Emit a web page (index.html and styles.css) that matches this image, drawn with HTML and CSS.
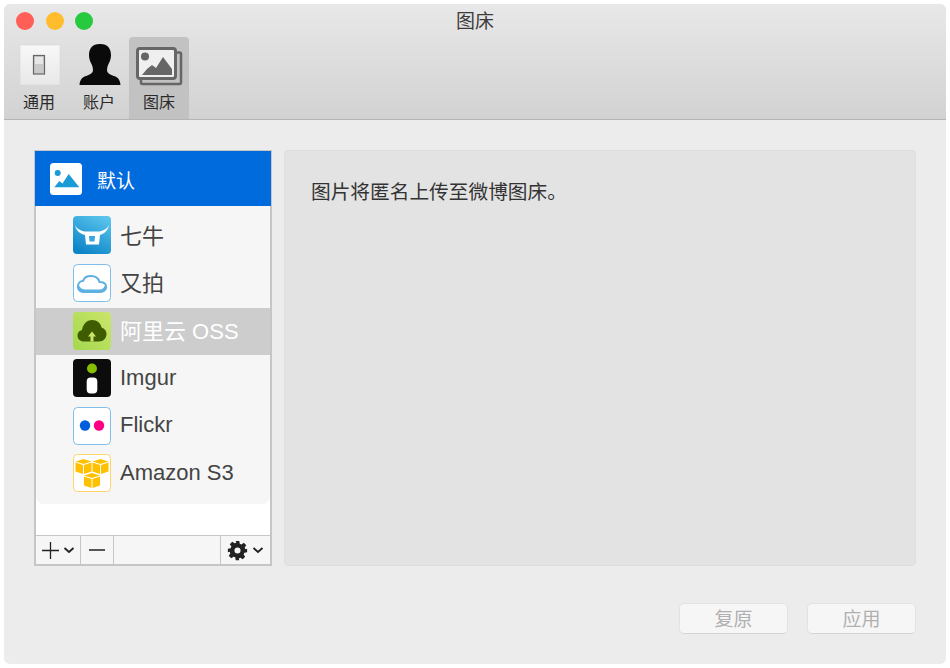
FILE: index.html
```html
<!DOCTYPE html>
<html lang="zh-CN">
<head>
    <meta charset="UTF-8">
    <title>图床</title>
    <link rel="stylesheet" href="styles.css">
</head>
<body>
    <div class="window">
        <header class="titlebar">
            <div class="traffic">
                <span class="light red"></span>
                <span class="light yellow"></span>
                <span class="light green"></span>
            </div>
            <div class="title">图床</div>
            <div class="tabs">
                <div class="tab">
                    <svg class="tab-icon" viewBox="0 0 44 44">
                        <defs>
                            <linearGradient id="sw" x1="0" y1="0" x2="0" y2="1">
                                <stop offset="0" stop-color="#f8f8f8"/>
                                <stop offset="1" stop-color="#e8e8e8"/>
                            </linearGradient>
                        </defs>
                        <rect x="3" y="2" width="40" height="40" fill="url(#sw)" stroke="#d8d8d8" stroke-width="0.6"/>
                        <rect x="16.500" y="12.500" width="11" height="18.500" fill="#c9c9c9" stroke="#666" stroke-width="1.200"/>
                        <rect x="18" y="14" width="8" height="7" fill="#e6e6e6"/>
                    </svg>
                    <span>通用</span>
                </div>
                <div class="tab">
                    <svg class="tab-icon" viewBox="0 0 44 44">
                        <path d="M22.500 1c-7 0-10.500 4.500-10.500 11 0 3 .8 6 2.500 9 1 2 1.500 4 1.500 6 0 3-2.500 4.500-7 6-4 1.500-6 3.500-6.500 9h41c-.5-5.500-2.500-7.500-6.500-9-4.500-1.500-7-3-7-6 0-2 .5-4 1.500-6 1.700-3 2.500-6 2.500-9 0-6.500-3.500-11-10.500-11z" fill="#0a0a0a"/>
                    </svg>
                    <span>账户</span>
                </div>
                <div class="tab active">
                    <svg class="tab-icon tab-icon-wide" viewBox="0 0 48 44">
                        <path d="M6 37v2.500c0 1 .8 1.500 1.500 1.500h37c1 0 1.500-.8 1.500-1.500V11c0-1-.8-1.500-1.500-1.500H42" fill="none" stroke="#666" stroke-width="2.500"/>
                        <rect x="2.500" y="5.500" width="38" height="30" rx="2.500" fill="#efefef" stroke="#666" stroke-width="3"/>
                        <circle cx="10" cy="13.500" r="4" fill="#666"/>
                        <path d="M7 32l5-6 5-4 4 3 7-11 9 12v6z" fill="#666"/>
                    </svg>
                    <span>图床</span>
                </div>
            </div>
        </header>
        <main class="content">
            <div class="panes">
                <aside class="sidebar">
                    <div class="sidebar-head">
                        <span class="app-icon head-icon">
                            <svg viewBox="0 0 32 32">
                                <rect width="32" height="32" rx="3.500" fill="#fff"/>
                                <circle cx="7.700" cy="10" r="3" fill="#1a9ad6"/>
                                <path d="M4.300 24.300l5-6.300 3.200 2.500L18.700 11l10.600 13.300z" fill="#1a9ad6"/>
                            </svg>
                        </span>
                        <span class="head-name">默认</span>
                    </div>
                    <ul class="hosts">
                        <li class="host">
                            <span class="app-icon">
                                <svg viewBox="0 0 38 38">
                                    <defs>
                                        <linearGradient id="qn" x1="0.800" y1="0" x2="0.300" y2="1">
                                            <stop offset="0" stop-color="#5ac4ec"/>
                                            <stop offset="1" stop-color="#0c84c8"/>
                                        </linearGradient>
                                    </defs>
                                    <rect width="38" height="38" rx="4" fill="url(#qn)"/>
                                    <path d="M2 9c2 4 6 6 10 6.500h14c4-.5 8-2.500 10-6.500-1 5-4 8.500-9 10l-1 9.500H13l-1-9.500C6 17.500 3 14 2 9z" fill="#fff"/>
                                    <path d="M16 20h6l-.5 5.500h-5z" fill="#3aa6dc"/>
                                </svg>
                            </span>
                            <span class="host-name cjk">七牛</span>
                        </li>
                        <li class="host">
                            <span class="app-icon">
                                <svg viewBox="0 0 38 38">
                                    <rect x="0.500" y="0.500" width="37" height="37" rx="4" fill="#fff" stroke="#7dbfe8"/>
                                    <path d="M10.500 28c-4 0-5.500-2.500-5.500-5.700 0-3 2.200-5.300 5.200-5.600C11.200 13.500 14.500 12 18 12c4.500 0 7.500 2.300 8.500 6 3.800-.2 6.500 1.700 6.500 4.500 0 3.200-2.300 5.500-6 5.500z" fill="none" stroke="#5db0e2" stroke-width="2"/>
                                    <path d="M5 22.500c1.500 3.500 4.500 4.500 8 4.500h14c2.500 0 5-1.500 6-4.500" fill="none" stroke="#5db0e2" stroke-width="3"/>
                                </svg>
                            </span>
                            <span class="host-name cjk">又拍</span>
                        </li>
                        <li class="host selected">
                            <span class="app-icon">
                                <svg viewBox="0 0 38 38">
                                    <defs>
                                        <linearGradient id="ali" x1="1" y1="0" x2="0" y2="1">
                                            <stop offset="0" stop-color="#cbe56b"/>
                                            <stop offset="1" stop-color="#a3d84e"/>
                                        </linearGradient>
                                    </defs>
                                    <rect width="38" height="38" rx="4" fill="url(#ali)"/>
                                    <path d="M11 29.500c-4 0-6.500-2.500-6.500-6 0-3 2-5 4.500-5.500 1-6 5-10 10-10s9 3.500 9.500 7.500c3 .8 5 3.500 5 6.500 0 4-3 7.500-7.500 7.500z" fill="#3f5d00"/>
                                    <path d="M19 19.500l-4 5h2.500v5h3v-5H23z" fill="#cbe56b"/>
                                </svg>
                            </span>
                            <span class="host-name cjk">阿里云 OSS</span>
                        </li>
                        <li class="host">
                            <span class="app-icon">
                                <svg viewBox="0 0 38 38">
                                    <rect width="38" height="38" rx="4" fill="#0c0c0c"/>
                                    <circle cx="19" cy="9.500" r="5" fill="#85bf00"/>
                                    <rect x="13.700" y="18.500" width="10.600" height="16" rx="4" fill="#fff"/>
                                </svg>
                            </span>
                            <span class="host-name">Imgur</span>
                        </li>
                        <li class="host">
                            <span class="app-icon">
                                <svg viewBox="0 0 38 38">
                                    <rect x="0.500" y="0.500" width="37" height="37" rx="4" fill="#fff" stroke="#7dbfe8"/>
                                    <circle cx="12" cy="18.500" r="5.200" fill="#0060dc"/>
                                    <circle cx="26" cy="18.500" r="5.200" fill="#ff0084"/>
                                </svg>
                            </span>
                            <span class="host-name">Flickr</span>
                        </li>
                        <li class="host">
                            <span class="app-icon">
                                <svg viewBox="0 0 38 38">
                                    <defs>
                                        <g id="cube" fill="#ffc000">
                                            <path d="M0 2.500L8 0l8 2.500L8 5z"/>
                                            <path d="M0 3.500L7.500 6v9L0 12.500z"/>
                                            <path d="M8.500 6L16 3.500v9L8.500 15z"/>
                                        </g>
                                    </defs>
                                    <rect x="0.500" y="0.500" width="37" height="37" rx="4" fill="#fff" stroke="#ffd56b"/>
                                    <use href="#cube" x="2.500" y="5"/>
                                    <use href="#cube" x="19.500" y="5"/>
                                    <use href="#cube" x="11" y="19"/>
                                </svg>
                            </span>
                            <span class="host-name">Amazon S3</span>
                        </li>
                    </ul>
                    <div class="sidebar-fill"></div>
                    <div class="sidebar-bar">
                        <div class="bar-btn bar-add">
                            <svg width="17" height="17" viewBox="0 0 17 17"><path d="M8.500 0v17M0 8.500h17" stroke="#222" stroke-width="1.300"/></svg>
                            <svg width="12" height="7" viewBox="0 0 12 7"><path d="M1.500 1l4.500 4 4.500-4" fill="none" stroke="#222" stroke-width="1.800"/></svg>
                        </div>
                        <div class="bar-btn bar-remove">
                            <svg width="16" height="2" viewBox="0 0 16 2"><path d="M0 1h16" stroke="#222" stroke-width="1.300"/></svg>
                        </div>
                        <div class="bar-btn bar-space"></div>
                        <div class="bar-btn bar-gear">
                            <svg width="21" height="21" viewBox="0 0 24 24"><path fill-rule="evenodd" fill="#222" d="M10 1h4l.6 3.200 1.900.8 2.700-1.800 2.800 2.800-1.800 2.700.8 1.900L23 10v4l-3.200.6-.8 1.900 1.800 2.700-2.800 2.800-2.700-1.800-1.900.8L14 23h-4l-.6-3.200-1.900-.8-2.700 1.800-2.800-2.800 1.800-2.700-.8-1.900L1 14v-4l3.200-.6.800-1.900-1.800-2.700 2.800-2.800 2.700 1.800 1.900-.8zM12 8.500a3.500 3.500 0 1 0 0 7 3.500 3.500 0 0 0 0-7z"/></svg>
                            <svg width="12" height="7" viewBox="0 0 12 7"><path d="M1.500 1l4.500 4 4.500-4" fill="none" stroke="#222" stroke-width="1.800"/></svg>
                        </div>
                    </div>
                </aside>
                <section class="detail">
                    <p>图片将匿名上传至微博图床。</p>
                </section>
            </div>
            <div class="actions">
                <button class="btn">复原</button>
                <button class="btn">应用</button>
            </div>
        </main>
    </div>
</body>
</html>
```

FILE: styles.css
```css
html, body {
    margin: 0;
    padding: 0;
    background-color: #fff;
}
body {
    width: 950px;
    height: 668px;
    overflow: hidden;
    font-family: "Liberation Sans", "Noto Sans CJK SC", sans-serif;
}
.window {
    width: 942px;
    height: 660px;
    margin: 4px 0 0 4px;
    border-radius: 6px;
    overflow: hidden;
    background-color: #ececec;
    display: flex;
    flex-direction: column;
}
.titlebar {
    position: relative;
    height: 116px;
    box-sizing: border-box;
    flex-shrink: 0;
    background: linear-gradient(#e8e8e8, #d2d2d2);
    border-bottom: 1px solid #b4b4b4;
}
.traffic {
    position: absolute;
    top: 8px;
    left: 12px;
    display: flex;
    gap: 11.500px;
}
.light {
    width: 18px;
    height: 18px;
    border-radius: 50%;
}
.red { background-color: #ff5f56; }
.yellow { background-color: #ffbd2e; }
.green { background-color: #27c93f; }
.title {
    text-align: center;
    font-size: 19px;
    line-height: 20px;
    padding-top: 8px;
    color: #3c3c3c;
}
.tabs {
    display: flex;
    margin: 5px 0 0 5px;
}
.tab {
    width: 60px;
    height: 82px;
    box-sizing: border-box;
    padding-top: 6px;
    display: flex;
    flex-direction: column;
    align-items: center;
    font-size: 16px;
    line-height: 20px;
    color: #2a2a2a;
    border-radius: 4px 4px 0 0;
}
.tab.active {
    background-color: #c2c2c2;
}
.tab-icon {
    display: block;
    width: 44px;
    height: 44px;
    margin-bottom: 6px;
}
.tab-icon-wide {
    width: 48px;
}
.content {
    flex: 1;
    padding: 30px;
    display: flex;
    flex-direction: column;
}
.panes {
    display: flex;
    gap: 12px;
    height: 416px;
}
.sidebar {
    width: 238px;
    box-sizing: border-box;
    border: 2px solid #c6c6c6;
    border-top-width: 1px;
    background-color: #fff;
    display: flex;
    flex-direction: column;
}
.sidebar-head {
    height: 55px;
    flex-shrink: 0;
    background-color: #006bdc;
    display: flex;
    align-items: center;
    padding-left: 15px;
    margin: 0 -1px;
}
.app-icon {
    display: block;
    width: 38px;
    height: 38px;
    flex-shrink: 0;
}
.app-icon svg {
    display: block;
    width: 100%;
    height: 100%;
}
.head-icon {
    width: 32px;
    height: 32px;
}
.head-name {
    margin-left: 15px;
    padding-top: 2px;
    font-size: 19px;
    color: #fff;
}
.hosts {
    list-style: none;
    margin: 0;
    padding: 5.600px 0 0;
    height: 298px;
    box-sizing: border-box;
    flex-shrink: 0;
    background-color: #f6f6f6;
    border-radius: 0 0 8px 8px;
}
.host {
    height: 47.600px;
    display: flex;
    align-items: center;
    padding-left: 37px;
}
.host-name {
    margin-left: 9px;
    padding-bottom: 1px;
    font-size: 22px;
    color: #444;
}
.host-name.cjk {
    padding-bottom: 3px;
}
.host.selected {
    margin: 1px 0 -1px;
    padding-bottom: 2px;
    box-sizing: border-box;
    background-color: #cdcdcd;
}
.host.selected .host-name {
    color: #fff;
}
.sidebar-fill {
    flex: 1;
}
.sidebar-bar {
    height: 29px;
    flex-shrink: 0;
    display: flex;
    box-sizing: border-box;
    border-top: 1px solid #c6c6c6;
    background-color: #f6f6f6;
}
.bar-btn {
    display: flex;
    align-items: center;
    justify-content: center;
    box-sizing: border-box;
    border-right: 1px solid #c6c6c6;
}
.bar-add {
    width: 45px;
    gap: 4px;
}
.bar-remove {
    width: 33px;
}
.bar-space {
    width: 107px;
}
.bar-gear {
    flex: 1;
    border-right: 0;
    gap: 4px;
}
.detail {
    flex: 1;
    box-sizing: border-box;
    border: 1px solid #dedede;
    border-radius: 4px;
    background-color: #e3e3e3;
    padding: 28px 26px;
}
.detail p {
    margin: 0;
    font-size: 19.700px;
    line-height: 26px;
    color: #333;
}
.actions {
    display: flex;
    justify-content: flex-end;
    gap: 19px;
    margin-top: 37px;
}
.btn {
    width: 109px;
    height: 31px;
    padding: 0 0 3px;
    font-family: inherit;
    font-size: 19px;
    color: #b0b0b0;
    background-color: #f6f6f6;
    border: 1px solid #e2e2e2;
    border-bottom-color: #d4d4d4;
    border-radius: 5px;
}
```
